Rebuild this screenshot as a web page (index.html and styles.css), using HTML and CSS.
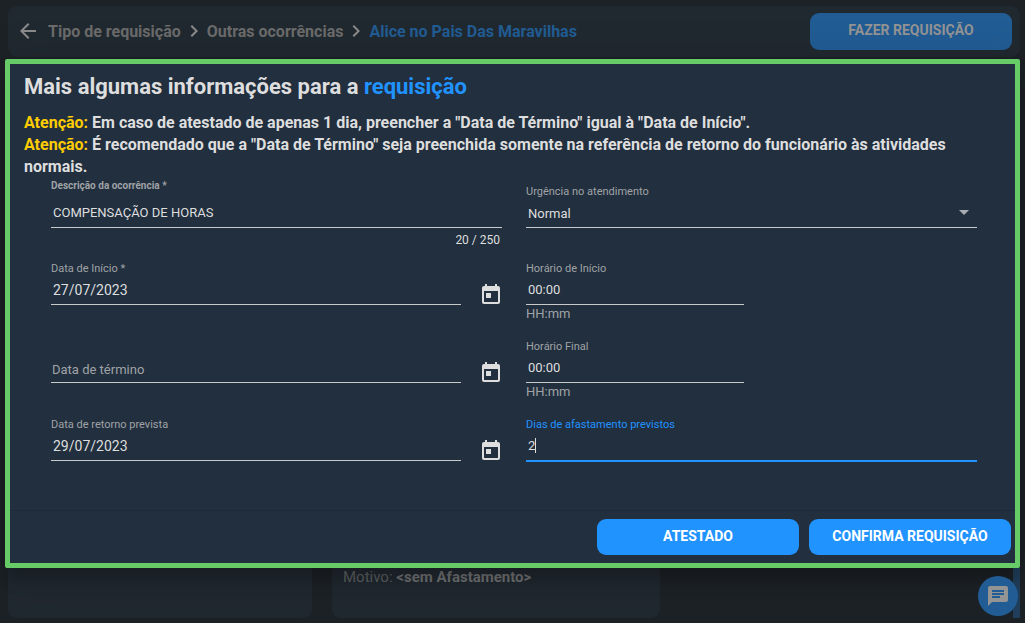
FILE: index.html
```html
<!DOCTYPE html>
<html lang="pt-BR">
<head>
    <meta charset="UTF-8">
    <meta name="viewport" content="width=device-width, initial-scale=1.0">
    <title>Requisição</title>
    <link rel="stylesheet" href="styles.css">
</head>
<body>

<header class="topbar">
    <nav class="breadcrumb">
        <a href="#" class="back" aria-label="Voltar">
            <svg width="16" height="16" viewBox="4 4 16 16"><path d="M20 11H7.83l5.59-5.59L12 4l-8 8 8 8 1.41-1.41L7.83 13H20v-2z"/></svg>
        </a>
        <a href="#">Tipo de requisição</a>
        <svg class="chevron" width="8" height="12" viewBox="8 6 8 12"><path d="M10 6L8.59 7.41 13.17 12l-4.58 4.59L10 18l6-6z"/></svg>
        <a href="#">Outras ocorrências</a>
        <svg class="chevron" width="8" height="12" viewBox="8 6 8 12"><path d="M10 6L8.59 7.41 13.17 12l-4.58 4.59L10 18l6-6z"/></svg>
        <a href="#" class="current">Alice no Pais Das Maravilhas</a>
    </nav>
    <button class="btn btn-dim">FAZER REQUISIÇÃO</button>
</header>

<main class="dialog">
    <h2>Mais algumas informações para a <span>requisição</span></h2>
    <div class="notice">
        <p><span>Atenção:</span> Em caso de atestado de apenas 1 dia, preencher a "Data de Término" igual à "Data de Início".</p>
        <p><span>Atenção:</span> É recomendado que a "Data de Término" seja preenchida somente na referência de retorno do funcionário às atividades normais.</p>
    </div>

    <form class="form" id="requisicao">
        <div class="field">
            <label for="descricao" class="strong">Descrição da ocorrência *</label>
            <input type="text" id="descricao" class="tall" maxlength="250" value="COMPENSAÇÃO DE HORAS">
            <span class="counter">20 / 250</span>
        </div>
        <div class="field lower">
            <label for="urgencia">Urgência no atendimento</label>
            <div class="select">
                <select id="urgencia">
                    <option>Normal</option>
                </select>
            </div>
        </div>

        <div class="date">
            <div class="field">
                <label for="inicio">Data de Início *</label>
                <input type="text" id="inicio" class="big" value="27/07/2023">
            </div>
            <button type="button" class="calendar" aria-label="Escolher data de início">
                <svg width="18" height="20" viewBox="3 1 18 20"><path d="M19 3h-1V1h-2v2H8V1H6v2H5c-1.11 0-1.99.9-1.99 2L3 19c0 1.1.89 2 2 2h14c1.1 0 2-.9 2-2V5c0-1.1-.9-2-2-2zm0 16H5V8h14v11zM7 10h5v5H7z"/></svg>
            </button>
        </div>
        <div class="field half">
            <label for="horaInicio">Horário de Início</label>
            <input type="text" id="horaInicio" value="00:00">
            <span class="hint">HH:mm</span>
        </div>

        <div class="date">
            <div class="field empty">
                <input type="text" id="termino" placeholder="Data de término" aria-label="Data de término">
            </div>
            <button type="button" class="calendar" aria-label="Escolher data de término">
                <svg width="18" height="20" viewBox="3 1 18 20"><path d="M19 3h-1V1h-2v2H8V1H6v2H5c-1.11 0-1.99.9-1.99 2L3 19c0 1.1.89 2 2 2h14c1.1 0 2-.9 2-2V5c0-1.1-.9-2-2-2zm0 16H5V8h14v11zM7 10h5v5H7z"/></svg>
            </button>
        </div>
        <div class="field half">
            <label for="horaFinal">Horário Final</label>
            <input type="text" id="horaFinal" value="00:00">
            <span class="hint">HH:mm</span>
        </div>

        <div class="date">
            <div class="field">
                <label for="retorno">Data de retorno prevista</label>
                <input type="text" id="retorno" class="big" value="29/07/2023">
            </div>
            <button type="button" class="calendar" aria-label="Escolher data de retorno">
                <svg width="18" height="20" viewBox="3 1 18 20"><path d="M19 3h-1V1h-2v2H8V1H6v2H5c-1.11 0-1.99.9-1.99 2L3 19c0 1.1.89 2 2 2h14c1.1 0 2-.9 2-2V5c0-1.1-.9-2-2-2zm0 16H5V8h14v11zM7 10h5v5H7z"/></svg>
            </button>
        </div>
        <div class="field active">
            <label for="dias">Dias de afastamento previstos</label>
            <div class="typing">
                <input type="text" id="dias" value="2">
            </div>
        </div>
    </form>

    <div class="actions">
        <button class="btn" type="button">ATESTADO</button>
        <button class="btn" type="submit" form="requisicao">CONFIRMA REQUISIÇÃO</button>
    </div>
</main>

<section class="cards">
    <div class="card"></div>
    <div class="card"><p>Motivo: <strong>&lt;sem Afastamento&gt;</strong></p></div>
    <div class="rail"></div>
</section>

<button class="chat" aria-label="Chat">
    <svg width="20" height="20" viewBox="2 2 20 20"><path d="M20 2H4c-1.1 0-1.99.9-1.99 2L2 22l4-4h14c1.1 0 2-.9 2-2V4c0-1.1-.9-2-2-2zM6 9h12v2H6V9zm8 5H6v-2h8v2zm4-6H6V6h12v2z"/></svg>
</button>

</body>
</html>
```

FILE: styles.css
```css
* {
    box-sizing: border-box;
}
body {
    font-family: Roboto, sans-serif;
    background-color: #1d2227;
    color: #dedede;
    margin: 0;
    padding: 6px 5px;
}
svg {
    display: block;
    fill: currentColor;
}
button {
    font-family: inherit;
    border: none;
    cursor: pointer;
}
.topbar {
    display: flex;
    align-items: center;
    justify-content: space-between;
    height: 51px;
    margin-left: 3px;
    padding: 0 8px 1px 12px;
    border-radius: 9px;
    background: #212930;
}
.breadcrumb {
    display: flex;
    align-items: center;
    gap: 9px;
    font-size: 16px;
    font-weight: bold;
    color: #6b6b6b;
}
.breadcrumb a {
    color: inherit;
    text-decoration: none;
}
.breadcrumb .back {
    margin-right: 3px;
    color: #8b8b8b;
}
.breadcrumb .chevron {
    color: #8b8b8b;
}
.breadcrumb .current {
    color: #215c94;
}
.btn {
    width: 202px;
    height: 36px;
    padding: 0 0 2px;
    border-radius: 9px;
    background: #2193ff;
    color: white;
    font-size: 14px;
    font-weight: bold;
}
.btn-dim {
    height: 37px;
    background: #215c94;
    color: #949494;
}
.dialog {
    position: relative;
    margin-top: 2px;
    border: 5px solid #67cc67;
    border-radius: 2px;
    background: #212f3f;
    box-shadow: 0 11px 15px rgba(0, 0, 0, 0.2), 0 9px 46px 8px rgba(0, 0, 0, 0.12);
}
.dialog h2 {
    margin: 0;
    padding: 8px 14px 10px;
    font-size: 22px;
    line-height: 30px;
}
.dialog h2 span {
    color: #2193ff;
}
.notice {
    padding: 0 14px;
    font-size: 16px;
    font-weight: bold;
    line-height: 22px;
}
.notice p {
    margin: 0;
}
.notice span {
    color: #ffcc00;
}
.form {
    display: grid;
    grid-template-columns: 1fr 1fr;
    grid-template-rows: 83px 78px 78px;
    column-gap: 24px;
    padding: 0 38px 48px 41px;
}
.field {
    display: flex;
    flex-direction: column;
    flex: 1;
}
.field label {
    font-size: 11px;
    line-height: 16px;
    color: #a0a3a6;
}
.field label.strong {
    font-size: 10px;
    font-weight: bold;
}
.field input,
.field select {
    width: 100%;
    height: 28px;
    padding: 0 2px;
    border: none;
    border-bottom: 1px solid #c8c9ca;
    border-radius: 0;
    outline: none;
    background: transparent;
    color: #dedede;
    font-family: inherit;
    font-size: 13px;
}
.field input {
    padding-bottom: 2px;
}
.field input.tall {
    height: 34px;
    padding-top: 4px;
    padding-bottom: 0;
}
.field input.big {
    font-size: 14px;
}
.field.lower {
    padding-top: 6px;
}
.field.half {
    width: calc(50% - 8px);
}
.field.empty {
    padding-top: 18px;
}
.field.empty input {
    height: 26px;
    padding: 0 1px;
}
.field input::placeholder {
    color: #a0a3a6;
    opacity: 1;
}
.field.active label {
    color: #2193ff;
}
.field.active input {
    display: block;
    height: 29px;
    border-bottom: 2px solid #2193ff;
    caret-color: transparent;
}
/* text cursor of the focused field */
.typing {
    position: relative;
}
.typing::after {
    content: "";
    position: absolute;
    left: 9px;
    top: 5px;
    width: 1px;
    height: 15px;
    background: #dedede;
}
.select {
    position: relative;
}
.select select {
    display: block;
    appearance: none;
}
.select::after {
    content: "";
    position: absolute;
    right: 8px;
    top: 10px;
    border: 5px solid transparent;
    border-top-color: #a9adb2;
    border-bottom: none;
    pointer-events: none;
}
.counter {
    padding: 4px 2px 0;
    font-size: 12px;
    line-height: 16px;
    text-align: right;
}
.hint {
    font-size: 13px;
    line-height: 18px;
    color: #a0a3a6;
}
.date {
    display: flex;
    align-items: flex-start;
    gap: 21px;
}
.calendar {
    margin: 23px 2px 0 0;
    padding: 0;
    background: none;
    color: #dedede;
}
.actions {
    display: flex;
    justify-content: flex-end;
    gap: 10px;
    padding: 8px 4px;
    border-top: 1px solid #1d2936;
}
.cards {
    display: flex;
    gap: 20px;
    height: 50px;
    margin-left: 3px;
}
.card {
    flex: 0 1 328px;
    padding: 0 11px;
    border-radius: 0 0 9px 9px;
    background: #212930;
    color: #5f6265;
    font-size: 15px;
}
.card:first-child {
    flex-basis: 304px;
}
.card p {
    margin: 0;
    line-height: 18px;
}
.card strong {
    color: #717375;
}
.rail {
    width: 7px;
    margin-left: auto;
    background: #213f5c;
}
.chat {
    position: fixed;
    right: 7px;
    bottom: 7px;
    width: 40px;
    height: 40px;
    padding: 10px;
    border-radius: 50%;
    background: #215c94;
    color: #949494;
}
```
